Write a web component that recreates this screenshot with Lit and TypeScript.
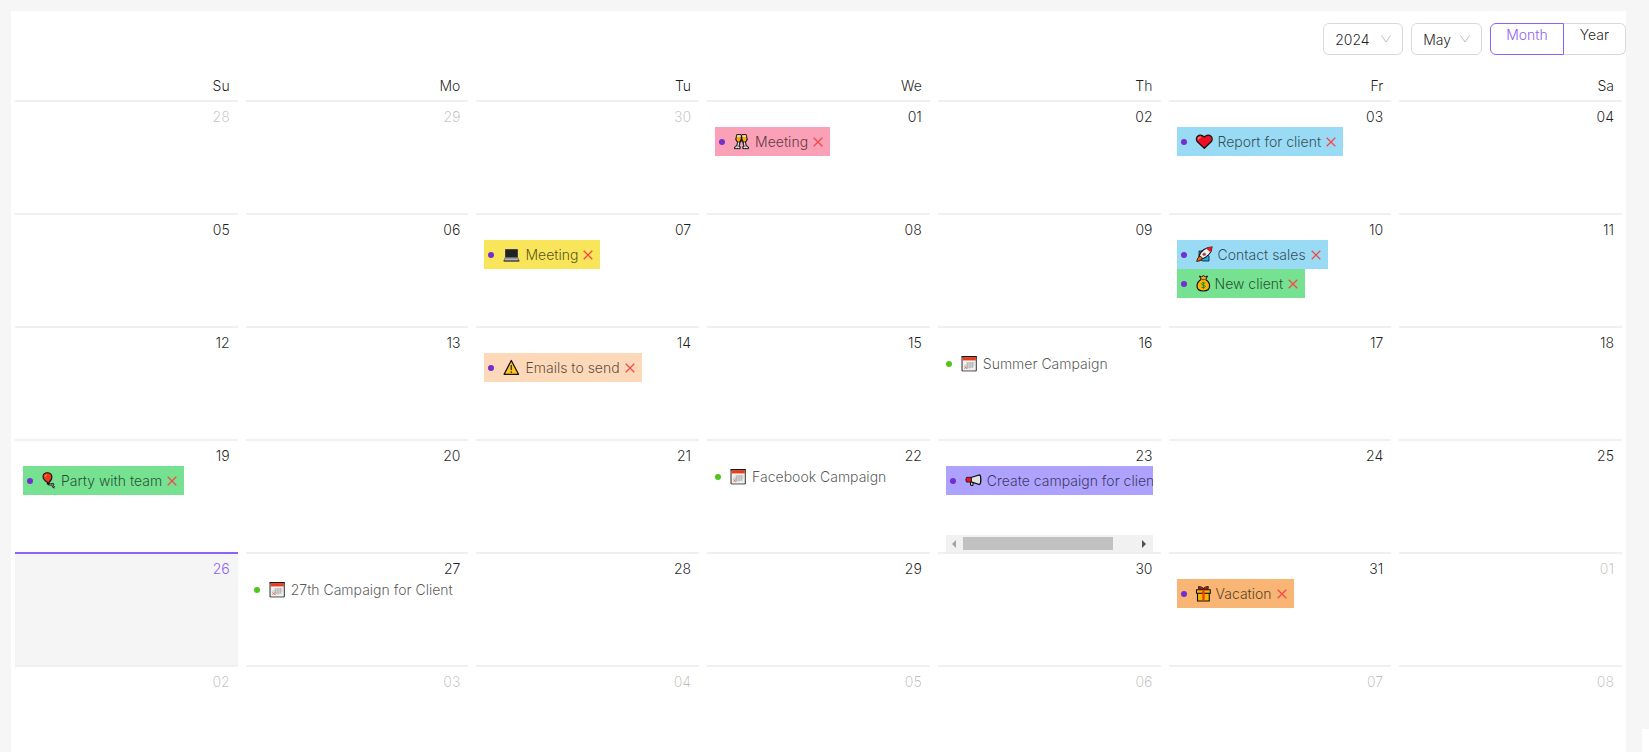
import { LitElement, html, svg, css, nothing } from "lit";
import { customElement, property } from "lit/decorators.js";

type Tone = "pink" | "blue" | "yellow" | "green" | "peach" | "purple" | "orange";
interface CalendarEvent {
  icon: string;
  text: string;
  tone?: Tone;
}
interface Day {
  label: string;
  outside?: boolean;
  today?: boolean;
  scrolls?: boolean;
  events?: CalendarEvent[];
}

const ICONS: Record<string, { width: number; art: unknown }> = {
  cheers: {
    width: 18,
    art: svg`<path d="M3.800 1.500H8l.5 1 .5-1h4.200l1.200 5-1.800 3 .7 3 2.200 1.500v1.700H9.800v-2l.8-.8-.6-3L8.500 7.500 7 9.900l-.6 3 .8.8v2H1.500V14l2.200-1.500.7-3-1.800-3z" fill="#151515" stroke="#151515" stroke-width=".8" stroke-linejoin="round"/>
      <path d="M4.200 2.200h3.500V6L6.100 9.100 4.200 7.900 3.400 6z" fill="#f7a90c"/><path d="M12.800 2.200H9.300V6l1.600 3.100 1.900-1.200.8-1.900z" fill="#f7a90c"/>
      <path d="M4.200 2.200h3.500v1.600H3.900zM12.800 2.200H9.300v1.600h3.800z" fill="#e4ecec"/>
      <path d="M5.700 9.400 4.900 13.200M11.300 9.400l.8 3.800" stroke="#e4ecec" stroke-width="1.200"/>
      <path d="M2.500 14.800q1.800-1.500 3.800 0M10.700 14.800q1.800-1.500 3.800 0" fill="none" stroke="#e4ecec" stroke-width="1.500"/>`,
  },
  heart: {
    width: 19,
    art: svg`<path d="M9.300 15.300 2.200 8.500Q.500 5.800 2.300 3.400 5.800.800 9.300 4 12.800.800 16.300 3.400q1.800 2.400.1 5.100z" fill="#ee1025" stroke="#151515" stroke-width="1.200"/><path d="M3.300 6.500q.2-2.200 2.500-2.200" fill="none" stroke="#ff7a69" stroke-width="1.500"/>`,
  },
  laptop: {
    width: 19,
    art: svg`<path d="M3.500 3.500h12v8h-12z" fill="#222" stroke="#444"/><path d="M3.300 11.500h12.400l1.500 3.500H1.800z" fill="#b5b4b8" stroke="#555" stroke-width=".8"/><path d="M4 12h11" stroke="#777" stroke-width="1"/><path d="M1.800 15h15.400" stroke="#333"/>`,
  },
  rocket: {
    width: 19,
    art: svg`<path d="M4 5h4l6 5v5H8l-4-1.500z" fill="#1aaee8" stroke="#111" stroke-width=".8"/><path d="M4 12Q4 7 9 3.500 13 .800 17 1q0 4-2.700 7-3.500 4-8 5.300z" fill="#f2f2f2" stroke="#111" stroke-width="1.100"/><path d="M11 2.400Q14.500.900 17 1q0 2.800-1.500 5.300z" fill="#e81224"/><circle cx="9.200" cy="8.300" r="1.400" fill="#e81224" stroke="#777" stroke-width=".7"/><path d="M5 10q-3 1.500-3.300 5.500Q6 15.500 7.500 12z" fill="#f7630c" stroke="#111" stroke-width=".8"/>`,
  },
  money: {
    width: 16,
    art: svg`<path d="m4.500 1 1.800 3.500h4.500L12.500 1l-2 .8L8.500.700l-2 1.100z" fill="#f5b312" stroke="#111"/><path d="M6 4.500Q2 7 2 11q0 5 6.300 5t6.300-5q0-4-4-6.500z" fill="#fbb500" stroke="#111" stroke-width="1.200"/><path d="M6 4.500h5" stroke="#a44b00" stroke-width="1.200"/><path d="M10.300 8.200q-3.800-1.400-3.700.5 0 1.200 1.900 1.500 2 .4 1.800 1.600-.3 1.700-3.800.5M8.400 6.900v7" fill="none" stroke="#168a22" stroke-width="1"/>`,
  },
  warning: {
    width: 19,
    art: svg`<path d="m9.300 1.500 7.200 13.800H2.100z" fill="#ffc31f" stroke="#151515" stroke-width="1.300" stroke-linejoin="round"/><path d="M9.300 6v5M9.300 12.200v1.600" stroke="#443713" stroke-width="1.400"/>`,
  },
  calendar: {
    width: 19,
    art: svg`<path d="M2 1.700h14.300v14.200H2z" fill="#ddd" stroke="#333" stroke-width="1"/><path d="M1.500 1.700h15.300" stroke="#111" stroke-width="1.200"/><path d="M2.500 2.300h13.300v3H2.500z" fill="#f03a17"/><path d="M3 6h12.300v9.300H3z" fill="#f0f0f0"/><path d="M6.500 8h8M4.500 10h10M4.500 12h9M7.700 7.500v6.500M10 7v6.500M12.300 7v5.500" stroke="#aaa" stroke-width=".8"/><path d="m4.500 11.500 2.300 2.300m0-2.300-2.300 2.300" stroke="#ef604c" stroke-width=".9"/>`,
  },
  balloon: {
    width: 16,
    art: svg`<path d="M7 11q.8 2.200 3.200 1.200 2.800-.6 1.600 1.300-.2 1.500 2 1.800" fill="none" stroke="#111" stroke-width="2.200"/><path d="M7 11q.8 2.200 3.200 1.200 2.800-.6 1.600 1.300-.2 1.500 2 1.800" fill="none" stroke="#ccc" stroke-width=".7"/><path d="M2 4.800Q2 .800 6.300.800t4.600 4q.2 3-3 5.700l.3 1.300H6.300l.2-1.300Q2.200 8 2 4.800z" fill="#f03a17" stroke="#111" stroke-width="1.100"/><path d="M4 5q.2-2 2-2.300" fill="none" stroke="#ff9478"/>`,
  },
  megaphone: {
    width: 19,
    art: svg`<path d="M6.500 9.500v3q.4 1.400 2.300.8l.5-3" fill="#d7d7d7" stroke="#111" stroke-width="1.100"/><path d="M7 5.500 15.500 3q1.300.3 1.300 4.500t-1.300 5L7 9.800z" fill="#e3e3e1" stroke="#111" stroke-width="1.300"/><path d="M2.500 5.300H7.300v4.800H2.500q-1.300-2.300 0-4.800z" fill="#ef1225" stroke="#111" stroke-width=".8"/>`,
  },
  gift: {
    width: 17,
    art: svg`<path d="M2.500 8h11.800v8H2.500z" fill="#fbb500" stroke="#111" stroke-width="1.100"/><path d="M1.500 4.700h13.800v3.500H1.500z" fill="#fbb500" stroke="#111" stroke-width="1.100"/><path d="M8.400 4.300 3.600 3.900 3.500 1.500q2.500-.3 4.900 1.800 2.400-2.100 4.900-1.800l-.1 2.400z" fill="#d82413" stroke="#111" stroke-width=".8"/><path d="M7.300 4.800h2.300v10.700H7.300z" fill="#ef3b18"/>`,
  },
};

const out = (...labels: string[]): Day[] => labels.map((label) => ({ label, outside: true }));
const days = (...labels: string[]): Day[] => labels.map((label) => ({ label }));
const day = (label: string, ...events: CalendarEvent[]): Day => ({ label, events });
const ev = (icon: string, text: string, tone?: Tone): CalendarEvent => ({ icon, text, tone });

const WEEKS: Day[][] = [
  [...out("28", "29", "30"), day("01", ev("cheers", "Meeting", "pink")), ...days("02"), day("03", ev("heart", "Report for client", "blue")), ...days("04")],
  [...days("05", "06"), day("07", ev("laptop", "Meeting", "yellow")), ...days("08", "09"), day("10", ev("rocket", "Contact sales", "blue"), ev("money", "New client", "green")), ...days("11")],
  [...days("12", "13"), day("14", ev("warning", "Emails to send", "peach")), ...days("15"), day("16", ev("calendar", "Summer Campaign")), ...days("17", "18")],
  [day("19", ev("balloon", "Party with team", "green")), ...days("20", "21"), day("22", ev("calendar", "Facebook Campaign")), { ...day("23", ev("megaphone", "Create campaign for client", "purple")), scrolls: true }, ...days("24", "25")],
  [{ label: "26", today: true }, day("27", ev("calendar", "27th Campaign for Client")), ...days("28", "29", "30"), day("31", ev("gift", "Vacation", "orange")), ...out("01")],
  out("02", "03", "04", "05", "06", "07", "08"),
];

@customElement("calendar-event")
class CalendarEventItem extends LitElement {
  @property({ attribute: false }) event!: CalendarEvent;

  static styles = css`
    :host { display: block; }
    .event {
      display: flex;
      align-items: center;
      width: max-content;
      height: 21px;
      color: rgba(0, 0, 0, 0.68);
      white-space: nowrap;
    }
    .toned { padding: 4px; }
    .pink { background: #faa0b7; }
    .blue { background: #99daf5; }
    .yellow { background: #f8e559; }
    .green { background: #76e291; }
    .peach { background: #fed9b9; }
    .purple { background: #ada2ff; }
    .orange { background: #f8b573; }
    .dot {
      width: 6px;
      height: 6px;
      margin-right: 8px;
      border-radius: 50%;
      background: #52c41a;
    }
    .toned .dot { background: #722ed1; }
    .icon { margin-right: 4px; }
    .remove {
      display: flex;
      align-items: center;
      justify-content: center;
      width: 16px;
      height: 16px;
      margin-left: 2px;
      padding: 0;
      border: 0;
      background: none;
      color: #f5484b;
      cursor: pointer;
    }
  `;

  render() {
    const { icon, text, tone } = this.event;
    const { width, art } = ICONS[icon];
    return html`<div class="event ${tone ? `toned ${tone}` : ""}">
      <span class="dot"></span>
      <svg class="icon" width=${width} height="17" viewBox="0 0 ${width} 17" aria-hidden="true">${art}</svg>
      <span>${text}</span>
      ${tone
        ? html`<button class="remove" aria-label="Remove ${text}">
            <svg width="10" height="10" viewBox="0 0 10 10"><path d="m.7.7 8.600 8.600M9.300.7.7 9.300" stroke="currentColor" stroke-width="1.300" /></svg>
          </button>`
        : nothing}
    </div>`;
  }
}

@customElement("app-root")
class AppRoot extends LitElement {
  static styles = css`
    :host {
      display: block;
      box-sizing: border-box;
      height: 100vh;
      overflow: hidden;
      padding: 11px 23px 0 11px;
      background: #f6f6f6;
      color: rgba(0, 0, 0, 0.88);
      font-family: Inter, "Liberation Sans", sans-serif;
      font-size: 14px;
      font-weight: 300;
      line-height: 21px;
    }
    .calendar { background: #fff; }
    .toolbar {
      display: flex;
      justify-content: flex-end;
      gap: 8px;
      padding: 12px 0;
    }
    .picker { position: relative; }
    .picker select {
      appearance: none;
      box-sizing: border-box;
      width: 80px;
      height: 32px;
      padding: 0 24px 0 11px;
      border: 1px solid #d9d9d9;
      border-radius: 6px;
      background: #fff;
      color: inherit;
      font: inherit;
    }
    .picker .month { width: 71px; }
    .picker svg {
      position: absolute;
      right: 12px;
      top: 12px;
      pointer-events: none;
    }
    .modes {
      display: flex;
      margin: 0;
      padding: 0;
      border: 0;
    }
    .mode {
      box-sizing: border-box;
      height: 32px;
      padding: 0 15px;
      border: 1px solid #d9d9d9;
      cursor: pointer;
    }
    .mode:first-child { border-radius: 6px 0 0 6px; }
    .mode:last-child { padding: 0 16px; border-left: 0; border-radius: 0 6px 6px 0; }
    .mode:has(:checked) { border-color: #9061f9; color: #9061f9; }
    .mode input {
      position: absolute;
      opacity: 0;
      pointer-events: none;
    }
    .grid {
      width: 100%;
      table-layout: fixed;
      border-collapse: collapse;
    }
    .grid th {
      padding: 8px 12px 4px 0;
      font-weight: 300;
      text-align: right;
    }
    .grid td { padding: 0; }
    .day {
      margin: 0 4px;
      padding: 4px 8px 0;
      border-top: 2px solid #f0f0f0;
    }
    .outside { color: rgba(0, 0, 0, 0.25); }
    .today { border-color: #9061f9; background: #f5f5f5; color: #9061f9; }
    .number { text-align: right; }
    .content {
      display: flex;
      flex-direction: column;
      height: 86px;
      overflow: hidden;
    }
    .events {
      flex: 1;
      margin: 0;
      padding: 0;
      overflow: hidden;
      list-style: none;
    }
    .scrollbar {
      display: flex;
      height: 17px;
      background: #f1f1f1;
    }
    .step {
      display: flex;
      align-items: center;
      justify-content: center;
      width: 17px;
      padding: 0;
      border: 0;
      background: none;
      color: #505050;
    }
    .step:disabled { color: #a3a3a3; }
    .track { flex: 1; padding: 2px 0; }
    .thumb { width: 87%; height: 13px; background: #c1c1c1; }
    .corner {
      position: fixed;
      right: 0;
      bottom: 0;
      width: 7px;
      height: 23px;
      background: #fff;
    }
  `;

  private chevron() {
    return html`<svg width="10" height="8" viewBox="0 0 10 8" aria-hidden="true"><path d="M.5.500 5 7 9.500.500" fill="none" stroke="#bfbfbf" /></svg>`;
  }

  private scrollbar() {
    return html`<div class="scrollbar">
      <button class="step" aria-label="Scroll left" disabled><svg width="4" height="8" viewBox="0 0 4 8"><path d="M4 0v8L0 4z" fill="currentColor" /></svg></button>
      <div class="track"><div class="thumb"></div></div>
      <button class="step" aria-label="Scroll right"><svg width="4" height="8" viewBox="0 0 4 8"><path d="M0 0v8l4-4z" fill="currentColor" /></svg></button>
    </div>`;
  }

  private cell(d: Day) {
    return html`<td>
      <div class="day ${d.outside ? "outside" : ""} ${d.today ? "today" : ""}">
        <div class="number">${d.label}</div>
        <div class="content">
          ${d.events
            ? html`<ul class="events">${d.events.map((e) => html`<li><calendar-event .event=${e}></calendar-event></li>`)}</ul>`
            : nothing}
          ${d.scrolls ? this.scrollbar() : nothing}
        </div>
      </div>
    </td>`;
  }

  render() {
    return html`<main class="calendar">
        <div class="toolbar">
          <div class="picker">
            <select aria-label="Year">
              <option>2023</option><option selected>2024</option><option>2025</option>
            </select>${this.chevron()}
          </div>
          <div class="picker">
            <select class="month" aria-label="Month">
              ${["Jan", "Feb", "Mar", "Apr", "May", "Jun", "Jul", "Aug", "Sep", "Oct", "Nov", "Dec"].map(
                (m) => html`<option ?selected=${m === "May"}>${m}</option>`,
              )}
            </select>${this.chevron()}
          </div>
          <fieldset class="modes" aria-label="View">
            <label class="mode"><input type="radio" name="mode" checked />Month</label>
            <label class="mode"><input type="radio" name="mode" />Year</label>
          </fieldset>
        </div>
        <table class="grid">
          <thead>
            <tr>${["Su", "Mo", "Tu", "We", "Th", "Fr", "Sa"].map((n) => html`<th scope="col">${n}</th>`)}</tr>
          </thead>
          <tbody>${WEEKS.map((w) => html`<tr>${w.map((d) => this.cell(d))}</tr>`)}</tbody>
        </table>
      </main>
      <div class="corner"></div>`;
  }
}
